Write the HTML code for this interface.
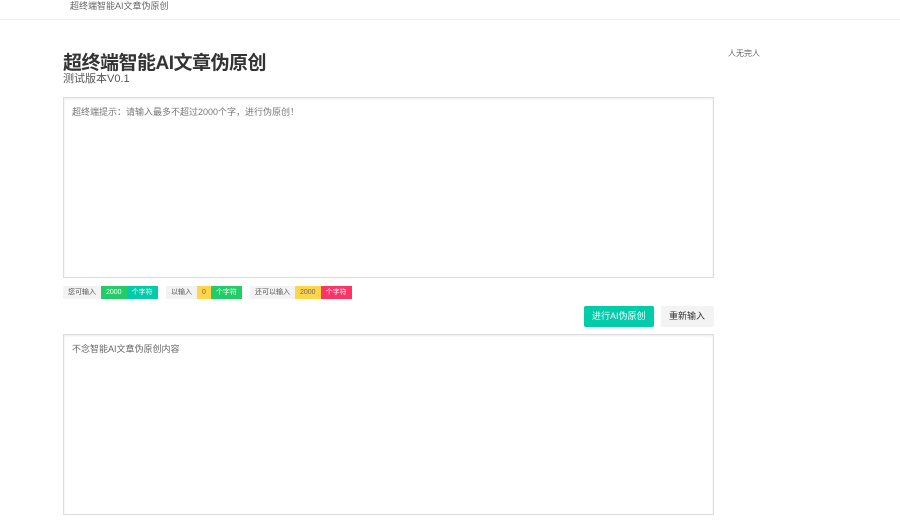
<!DOCTYPE html>
<html><head><meta charset="utf-8"><style>
*{margin:0;padding:0;box-sizing:border-box}
body{width:900px;height:524px;background:#fff;font-family:"Liberation Sans","Noto Sans CJK SC",sans-serif;position:relative;overflow:hidden;color:#333}
.nav{position:absolute;left:0;top:0;width:900px;height:20px;border-bottom:1px solid #eee;}
.nav span{position:absolute;left:70px;top:-1px;font-size:9px;color:#666}
h1{position:absolute;left:63px;top:48px;font-size:19px;font-weight:bold;color:#333;letter-spacing:-0.5px}
.sub{position:absolute;left:63px;top:70px;font-size:11px;color:#555}
.side{position:absolute;left:728px;top:48px;font-size:8px;color:#666}
.ta{position:absolute;left:63px;width:651px;border:1px solid #ddd;box-shadow:inset 0 1px 2px rgba(0,0,0,.08);font-size:9px;color:#777;padding:7px 8px}
.tags{position:absolute;top:286px;font-size:7px;height:13px;display:flex}
.tags span{display:inline-block;height:13px;line-height:13px;padding:0 5px}
.g{background:#f3f3f3;color:#555}.gr{background:#22cc66;color:#fff}.tq{background:#00ccaa;color:#fff}.y{background:#ffd54a;color:#666}.r{background:#ff3366;color:#fff}
.btn{position:absolute;top:306px;height:21px;line-height:21px;font-size:9px;padding:0 8px;border-radius:2px}
</style></head><body>
<div class="nav"><span>超终端智能AI文章伪原创</span></div>
<h1>超终端智能AI文章伪原创</h1>
<div class="sub">测试版本V0.1</div>
<div class="side">人无完人</div>
<div class="ta" style="top:97px;height:181px">超终端提示：请输入最多不超过2000个字，进行伪原创！</div>
<div class="tags" style="left:63px"><span class="g">您可输入</span><span class="gr">2000</span><span class="tq">个字符</span></div>
<div class="tags" style="left:166px"><span class="g">以输入</span><span class="y">0</span><span class="gr">个字符</span></div>
<div class="tags" style="left:250px"><span class="g">还可以输入</span><span class="y">2000</span><span class="r">个字符</span></div>
<div class="btn" style="left:584px;width:70px;background:#00ccaa;color:#fff">进行AI伪原创</div>
<div class="btn" style="left:661px;width:53px;background:#f3f3f3;color:#333">重新输入</div>
<div class="ta" style="top:334px;height:181px;color:#666">不念智能AI文章伪原创内容</div>
</body></html>
